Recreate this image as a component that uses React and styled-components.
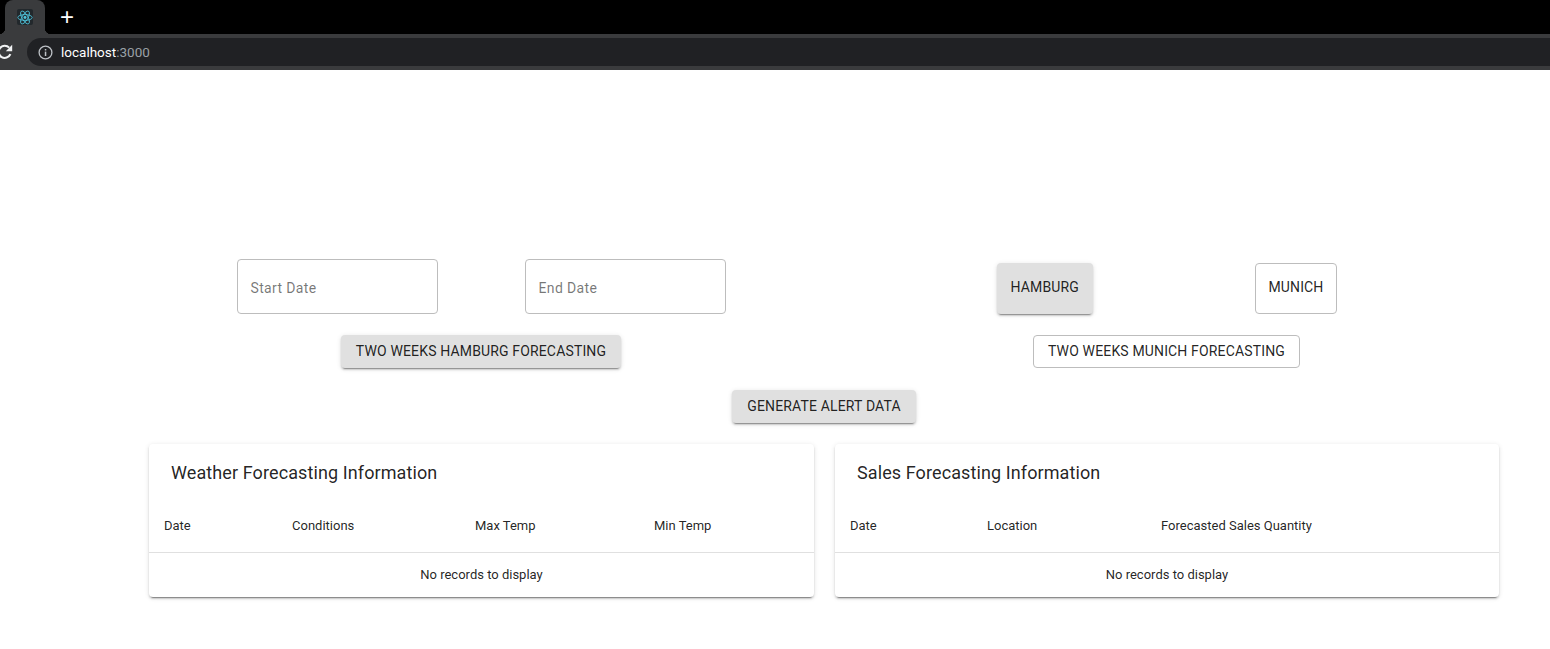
import React from "react";
import styled, { createGlobalStyle } from "styled-components";

const GlobalStyle = createGlobalStyle`
  html {
    overflow: hidden;
  }

  body {
    margin: 0;
    padding: 0;
    background: #fff;
    font-family: Roboto, "Liberation Sans", Arial, sans-serif;
    color: rgba(0, 0, 0, 0.87);
  }
`;

const ReactLogo = () => (
  <svg width="19" height="19" viewBox="-12 -12 24 24" fill="none" stroke="#4fc6de" strokeWidth="1.3">
    <circle r="2.2" fill="#4fc6de" stroke="none" />
    <ellipse rx="10.8" ry="4.4" />
    <ellipse rx="10.8" ry="4.4" transform="rotate(60)" />
    <ellipse rx="10.8" ry="4.4" transform="rotate(120)" />
  </svg>
);

const ReloadIcon = () => (
  <svg width="16" height="16" viewBox="0 0 16 16" fill="none">
    <path d="M13.4 10.2A6.1 6.1 0 1 1 12.2 3.6" stroke="#f1f3f4" strokeWidth="2.1" />
    <path d="M15.2 0.8v6.4H8.8z" fill="#f1f3f4" />
  </svg>
);

const InfoIcon = () => (
  <svg width="15" height="15" viewBox="0 0 15 15" fill="none">
    <circle cx="7.5" cy="7.5" r="6.4" stroke="#bdc1c6" strokeWidth="1.3" />
    <rect x="6.8" y="6.6" width="1.5" height="4.4" fill="#bdc1c6" />
    <rect x="6.8" y="4" width="1.5" height="1.5" fill="#bdc1c6" />
  </svg>
);

const Browser = () => (
  <BrowserBar>
    <TabStrip>
      <Tab>
        <Favicon>
          <ReactLogo />
        </Favicon>
      </Tab>
      <NewTab>+</NewTab>
    </TabStrip>
    <Toolbar>
      <Reload>
        <ReloadIcon />
      </Reload>
      <Omnibox>
        <InfoIcon />
        <Url>
          localhost<Port>:3000</Port>
        </Url>
      </Omnibox>
    </Toolbar>
  </BrowserBar>
);

const ForecastTable = ({ title, columns }) => (
  <Card>
    <CardTitle>{title}</CardTitle>
    <HeadRow>
      {columns.map((col) => (
        <HeadCell key={col.label} $width={col.width}>
          {col.label}
        </HeadCell>
      ))}
    </HeadRow>
    <EmptyRow>No records to display</EmptyRow>
  </Card>
);

const App = () => (
  <>
    <GlobalStyle />
    <Browser />
    <Page>
      <Controls>
        <ControlColumn>
          <FieldRow>
            <DateField>Start Date</DateField>
            <DateField>End Date</DateField>
          </FieldRow>
          <Button $filled>TWO WEEKS HAMBURG FORECASTING</Button>
        </ControlColumn>
        <ControlColumn>
          <CityRow>
            <CityButton $filled>HAMBURG</CityButton>
            <CityButton>MUNICH</CityButton>
          </CityRow>
          <Button>TWO WEEKS MUNICH FORECASTING</Button>
        </ControlColumn>
      </Controls>
      <AlertRow>
        <Button $filled>GENERATE ALERT DATA</Button>
      </AlertRow>
      <Tables>
        <ForecastTable
          title="Weather Forecasting Information"
          columns={[
            { label: "Date", width: 128 },
            { label: "Conditions", width: 183 },
            { label: "Max Temp", width: 179 },
            { label: "Min Temp", width: 160 },
          ]}
        />
        <ForecastTable
          title="Sales Forecasting Information"
          columns={[
            { label: "Date", width: 137 },
            { label: "Location", width: 174 },
            { label: "Forecasted Sales Quantity", width: 300 },
          ]}
        />
      </Tables>
    </Page>
  </>
);

export default App;

const BrowserBar = styled.header`
  height: 70px;
  display: flex;
  flex-direction: column;
  background: #3a3b3d;
`;

const TabStrip = styled.div`
  height: 34px;
  background: #000;
  display: flex;
  align-items: stretch;
  padding-left: 5px;
`;

const Tab = styled.div`
  position: relative;
  width: 40px;
  background: #3a3b3d;
  border-radius: 8px 8px 0 0;
  display: flex;
  align-items: center;
  justify-content: center;

  &::before,
  &::after {
    content: "";
    position: absolute;
    bottom: 0;
    width: 6px;
    height: 6px;
  }

  &::before {
    left: -6px;
    background: radial-gradient(circle at 0 0, #000 6px, #3a3b3d 6.5px);
  }

  &::after {
    right: -6px;
    background: radial-gradient(circle at 100% 0, #000 6px, #3a3b3d 6.5px);
  }
`;

const Favicon = styled.div`
  width: 16px;
  height: 16px;
  background: #22282c;
  border-radius: 2px;
  display: flex;
  align-items: center;
  justify-content: center;
`;

const NewTab = styled.div`
  width: 44px;
  text-align: center;
  color: #fff;
  font-family: "Liberation Sans", sans-serif;
  font-size: 24px;
  line-height: 34px;
`;

const Toolbar = styled.div`
  height: 28px;
  margin: 4px 0;
  display: flex;
  align-items: center;
`;

const Reload = styled.div`
  width: 27px;
  display: flex;
  margin-left: -3px;
`;

const Omnibox = styled.div`
  flex: 1;
  height: 28px;
  background: #202124;
  border-radius: 14px 0 0 14px;
  display: flex;
  align-items: center;
  gap: 8px;
  padding-left: 11px;
  margin-left: 3px;
`;

const Url = styled.span`
  color: #fff;
  font-size: 13.5px;
`;

const Port = styled.span`
  color: #9aa0a6;
`;

const Page = styled.main`
  box-sizing: border-box;
  width: 1499px;
  padding: 189px 0 20px 149px;
  display: flex;
  flex-direction: column;
`;

const Controls = styled.section`
  display: grid;
  grid-template-columns: 664px 665px;
  column-gap: 21px;
`;

const ControlColumn = styled.div`
  display: flex;
  flex-direction: column;
  align-items: center;
  gap: 21px;
`;

const FieldRow = styled.div`
  display: flex;
  gap: 87px;
  height: 55px;
`;

const DateField = styled.div`
  box-sizing: border-box;
  width: 201px;
  height: 55px;
  border: 1px solid #bdbdbd;
  border-radius: 4px;
  padding: 2px 0 0 13px;
  display: flex;
  align-items: center;
  color: rgba(0, 0, 0, 0.54);
  font-size: 14px;
  letter-spacing: 0.35px;
`;

const CityRow = styled.div`
  display: flex;
  justify-content: space-between;
  align-items: flex-end;
  width: 340px;
  height: 55px;
`;

const Button = styled.button`
  box-sizing: border-box;
  height: 33px;
  padding: 0 ${(p) => (p.$filled ? "15px" : "14px")} 2px;
  border-radius: 4px;
  font-family: Roboto, "Liberation Sans", sans-serif;
  font-size: 14px;
  font-weight: 400;
  letter-spacing: 0.15px;
  color: rgba(0, 0, 0, 0.87);
  background: ${(p) => (p.$filled ? "#e0e0e0" : "#fff")};
  border: ${(p) => (p.$filled ? "none" : "1px solid #bdbdbd")};
  box-shadow: ${(p) =>
    p.$filled
      ? "0 3px 1px -2px rgba(0,0,0,.3), 0 2px 2px 0 rgba(0,0,0,.14), 0 1px 5px 0 rgba(0,0,0,.12)"
      : "none"};
`;

const CityButton = styled(Button)`
  height: 51px;
  padding: 0 ${(p) => (p.$filled ? "14px" : "12px")} 4px;
`;

const AlertRow = styled.div`
  display: flex;
  justify-content: center;
  margin: 22px 0 21px;
`;

const Tables = styled.section`
  display: grid;
  grid-template-columns: 665px 664px;
  column-gap: 21px;
`;

const Card = styled.article`
  border-radius: 4px;
  background: #fff;
  box-shadow: 0 3px 1px -2px rgba(0,0,0,.35), 0 2px 2px 0 rgba(0,0,0,.14), 0 1px 5px 0 rgba(0,0,0,.12);
`;

const CardTitle = styled.h2`
  margin: 0;
  height: 58px;
  padding: 0 22px 2px;
  box-sizing: border-box;
  display: flex;
  align-items: center;
  font-size: 18px;
  font-weight: 400;
  letter-spacing: 0.1px;
`;

const HeadRow = styled.div`
  height: 46px;
  display: flex;
  align-items: center;
  padding: 0 0 4px 15px;
  border-bottom: 1px solid #e0e0e0;
  font-size: 13px;
`;

const HeadCell = styled.div`
  width: ${(p) => p.$width}px;
  flex: none;
`;

const EmptyRow = styled.div`
  box-sizing: border-box;
  height: 44px;
  padding-bottom: 2px;
  display: flex;
  align-items: center;
  justify-content: center;
  font-size: 13px;
`;
